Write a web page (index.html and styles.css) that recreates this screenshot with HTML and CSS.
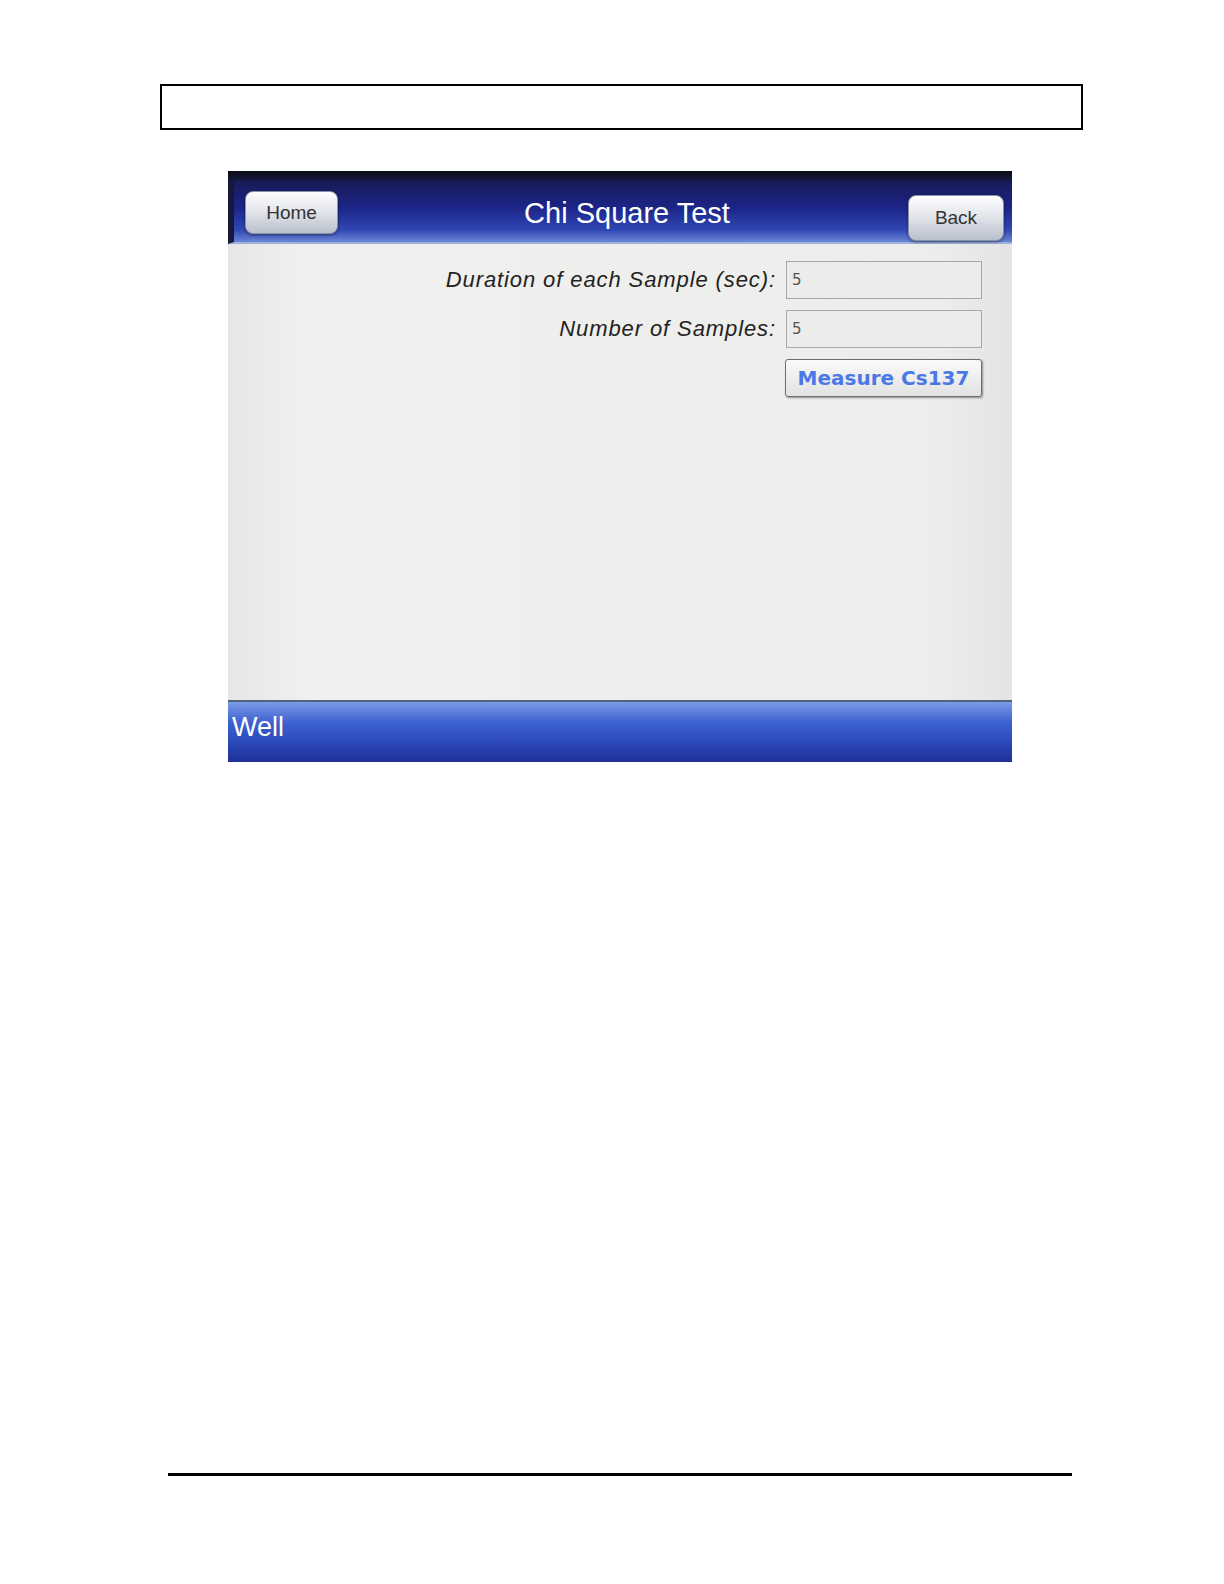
FILE: index.html
```html
<!DOCTYPE html>
<html lang="en">
<head>
  <meta charset="UTF-8">
  <title>Chi Square Test</title>
  <link rel="stylesheet" href="styles.css">
</head>
<body>
  <div class="page">
    <div class="header-box"></div>

    <div class="screen">
      <div class="top-edge"></div>
      <div class="title-bar">
        <button class="nav-btn home-btn">Home</button>
        <div class="title">Chi Square Test</div>
        <button class="nav-btn back-btn">Back</button>
      </div>
      <div class="content">
        <div class="form-row">
          <label>Duration of each Sample (sec):</label>
          <div class="field">5</div>
        </div>
        <div class="form-row">
          <label>Number of Samples:</label>
          <div class="field">5</div>
        </div>
        <div class="form-row">
          <button class="measure-btn">Measure Cs137</button>
        </div>
      </div>
      <div class="status-bar">Well</div>
    </div>

    <div class="footer-rule"></div>
  </div>
</body>
</html>
```

FILE: styles.css
```css
body {
  margin: 0;
  padding: 0;
  background: #fff;
  font-family: 'Liberation Sans', Arial, sans-serif;
}

.page {
  width: 1224px;
  display: flex;
  flex-direction: column;
  align-items: flex-start;
}

.header-box {
  margin: 84px 0 0 160px;
  width: 919px;
  height: 42px;
  border: 2px solid #000;
}

.screen {
  margin: 41px 0 0 228px;
  width: 784px;
  height: 591px;
  background: #ebebeb;
  display: flex;
  flex-direction: column;
  overflow: hidden;
}

.top-edge {
  height: 9px;
  background: linear-gradient(#0b0b14, #15183a);
}

.title-bar {
  height: 62px;
  display: flex;
  align-items: flex-start;
  justify-content: space-between;
  padding: 0 8px 0 11px;
  background: linear-gradient(#161a52 0%, #1c2588 45%, #2f46b4 80%, #6b86d6 100%);
  border-left: 6px solid #15183a;
  border-bottom: 2px solid #9eb0de;
}

.nav-btn {
  font-family: 'Liberation Sans', Arial, sans-serif;
  font-size: 19px;
  color: #333;
  border: 1px solid #8a93a8;
  border-radius: 8px;
  background: linear-gradient(#fdfdfd 0%, #e4e6ec 45%, #b9bfcc 100%);
  box-shadow: 0 1px 3px rgba(0, 0, 0, 0.5);
  padding: 0;
}

.home-btn {
  width: 93px;
  height: 43px;
  margin-top: 11px;
}

.back-btn {
  width: 96px;
  height: 46px;
  margin-top: 15px;
}

.title {
  color: #fff;
  font-size: 29px;
  margin-top: 17px;
  padding-left: 8px;
}

.content {
  flex: 1;
  padding: 17px 30px 0 0;
  background: linear-gradient(90deg, #e6e6e6 0%, #f0f0ee 10%, #ededeb 90%, #e4e4e4 100%);
  display: flex;
  flex-direction: column;
  align-items: flex-end;
  gap: 11px;
}

.form-row {
  display: flex;
  align-items: center;
  gap: 10px;
}

.form-row label {
  font-style: italic;
  font-size: 22px;
  letter-spacing: 0.9px;
  color: #222;
}

.field {
  width: 189px;
  height: 36px;
  border: 1px solid #a8a8a8;
  background: #ececea;
  font-family: 'DejaVu Sans', sans-serif;
  font-size: 15px;
  color: #555;
  padding-left: 5px;
  line-height: 36px;
}

.measure-btn {
  width: 197px;
  height: 38px;
  border: 1px solid #6f6f6f;
  border-radius: 3px;
  background: linear-gradient(#fafafa, #e2e2e2);
  box-shadow: 1px 1px 2px rgba(0, 0, 0, 0.4);
  color: #4a78e6;
  font-family: 'DejaVu Sans', sans-serif;
  font-weight: bold;
  font-size: 20px;
  padding: 0;
}

.status-bar {
  height: 62px;
  border-top: 2px solid #55607a;
  background: linear-gradient(#7b9ae6 0%, #3c60d0 35%, #2a47b6 70%, #1f2f96 100%);
  color: #fff;
  font-size: 27px;
  padding: 10px 0 0 4px;
  box-sizing: border-box;
}

.footer-rule {
  margin: 711px 0 0 168px;
  width: 904px;
  height: 3px;
  background: #000;
}
```
